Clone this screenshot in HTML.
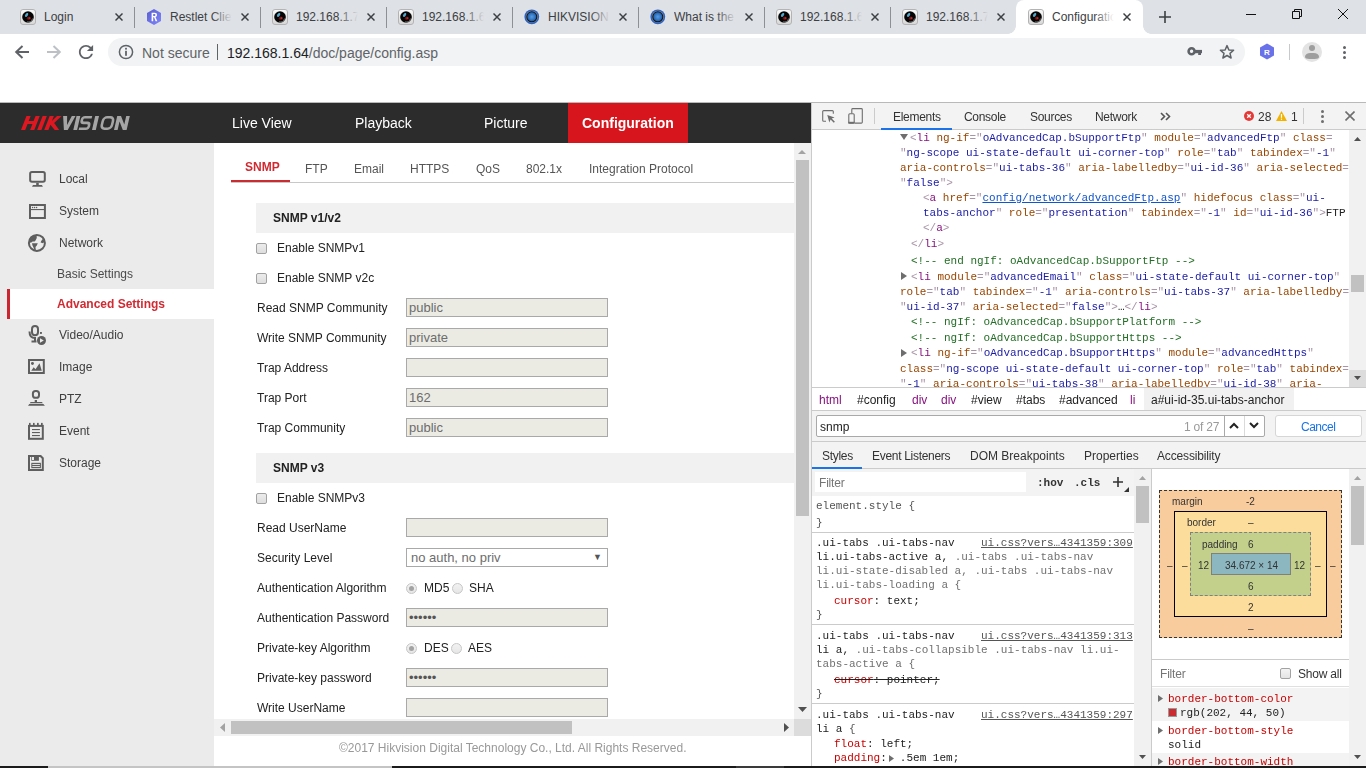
<!DOCTYPE html>
<html><head><meta charset="utf-8">
<style>
*{margin:0;padding:0;box-sizing:border-box}
html,body{width:1366px;height:768px;overflow:hidden;background:#fff;font-family:"Liberation Sans",sans-serif;position:relative}
.a{position:absolute}
.t{position:absolute;white-space:nowrap;line-height:1;will-change:transform}
/* chrome */
#tabstrip{left:0;top:0;width:1366px;height:34px;background:#dee1e6}
.tab{position:absolute;top:0;height:34px;width:126px}
.tab .ttl{position:absolute;left:36px;top:10px;font-size:12px;color:#3c4043;width:62px;overflow:hidden;white-space:nowrap;line-height:14px}
.tab .fade{position:absolute;left:78px;top:8px;width:20px;height:20px;background:linear-gradient(to right,rgba(222,225,230,0),#dee1e6)}
.tab .sep{position:absolute;left:0;top:7px;width:1px;height:21px;background:#8d9094}
.tab .x{position:absolute;left:107px;top:13px;width:8px;height:8px}
#toolbar{left:0;top:34px;width:1366px;height:36px;background:#fff}
#pill{left:108px;top:38px;width:1137px;height:28px;border-radius:14px;background:#f1f3f4}

.tab.act{background:#fff;border-radius:8px 8px 0 0}
.tab.act:before,.tab.act:after{content:"";position:absolute;bottom:0;width:8px;height:8px;background:radial-gradient(circle at 0 0,transparent 7.5px,#fff 8px)}
.tab.act:before{left:-8px}
.tab.act:after{right:-8px;background:radial-gradient(circle at 100% 0,transparent 7.5px,#fff 8px)}
.tab.act .fade{background:linear-gradient(to right,rgba(255,255,255,0),#fff)}
.fi{position:absolute;left:12px;top:9px;width:16px;height:16px;display:block}

.cb{position:absolute;width:11px;height:11px;border:1px solid #a2a2a2;border-radius:2px;background:linear-gradient(#ececec,#dedede)}
.inp{position:absolute;left:406px;width:202px;height:19px;border:1px solid #a9a9a9;background:#ebebe4;color:#6d6d6d;font-size:13px;line-height:17px;padding-left:2px;white-space:nowrap}
.inp.pw{padding-left:2px;color:#555}
.sel{position:absolute;left:406px;width:202px;height:19px;border:1px solid #a9a9a9;background:#fff;color:#6d6d6d;font-size:13px;line-height:17px;padding-left:4px;white-space:nowrap}
.sel span{position:absolute;right:5px;top:0;font-size:9px;color:#555}
.rd{position:absolute;width:11px;height:11px;border-radius:50%;border:1px solid #c6c6c6;background:linear-gradient(#f2f2f2,#e6e6e6)}
.rd.on:after{content:"";position:absolute;left:2px;top:2px;width:5px;height:5px;border-radius:50%;background:#a3a3a3}

.m{position:absolute;white-space:nowrap;will-change:transform;font-family:"Liberation Mono",monospace;font-size:11px;line-height:11px;color:#222}
.m b{font-weight:normal}
.p{color:#a894a6}.g{color:#881280}.n{color:#994500}.v{color:#1a1aa6}.c{color:#236e25}.lk{color:#1155cc;text-decoration:underline}
</style></head>
<body>
<div id="tabstrip" class="a">
<div class="tab" style="left:8px"><svg class="fi" viewBox="0 0 16 16"><defs><linearGradient id="cg" x1="0" y1="0" x2="0" y2="1"><stop offset="0" stop-color="#fbfbfb"/><stop offset="1" stop-color="#d6d6d6"/></linearGradient></defs><rect x="0.5" y="0.5" width="15" height="15" rx="2.5" fill="url(#cg)" stroke="#b3b3b3"/><circle cx="8" cy="8" r="5.8" fill="#050505"/><path d="M12.6 9.5A4.9 4.9 0 0 1 7 12.9" fill="none" stroke="#9a9a9a" stroke-width="0.7"/><ellipse cx="6.6" cy="5.9" rx="2.2" ry="1.3" transform="rotate(-55 6.6 5.9)" fill="#4fa9cc"/><ellipse cx="8.9" cy="9.3" rx="2.1" ry="1.7" fill="#6a0d0d"/><ellipse cx="9.3" cy="8.9" rx="0.9" ry="0.5" fill="#d85a5a"/></svg><div class="ttl">Login</div><div class="fade"></div><svg class="x" viewBox="0 0 8 8"><path d="M0.5 0.5L7.5 7.5M7.5 0.5L0.5 7.5" stroke="#3c4043" stroke-width="1.45"/></svg></div>
<div class="tab" style="left:134px"><div class="sep"></div><svg class="fi" viewBox="0 0 16 16"><defs><linearGradient id="rg" x1="0" y1="0" x2="1" y2="1"><stop offset="0" stop-color="#5a5fcf"/><stop offset="1" stop-color="#7f86fb"/></linearGradient></defs><path d="M8 0L15 4V12L8 16L1 12V4Z" fill="url(#rg)"/><path d="M5.6 12.2V3.8H8.6C10.2 3.8 11 4.6 11 5.9C11 7 10.4 7.6 9.5 7.9L11.3 12.2H9.6L8.1 8.3H7.2V12.2Z M7.2 5.1V7.1H8.4C9 7.1 9.4 6.8 9.4 6.1C9.4 5.4 9 5.1 8.4 5.1Z" fill="#fff"/></svg><div class="ttl">Restlet Client - REST API</div><div class="fade"></div><svg class="x" viewBox="0 0 8 8"><path d="M0.5 0.5L7.5 7.5M7.5 0.5L0.5 7.5" stroke="#3c4043" stroke-width="1.45"/></svg></div>
<div class="tab" style="left:260px"><div class="sep"></div><svg class="fi" viewBox="0 0 16 16"><defs><linearGradient id="cg" x1="0" y1="0" x2="0" y2="1"><stop offset="0" stop-color="#fbfbfb"/><stop offset="1" stop-color="#d6d6d6"/></linearGradient></defs><rect x="0.5" y="0.5" width="15" height="15" rx="2.5" fill="url(#cg)" stroke="#b3b3b3"/><circle cx="8" cy="8" r="5.8" fill="#050505"/><path d="M12.6 9.5A4.9 4.9 0 0 1 7 12.9" fill="none" stroke="#9a9a9a" stroke-width="0.7"/><ellipse cx="6.6" cy="5.9" rx="2.2" ry="1.3" transform="rotate(-55 6.6 5.9)" fill="#4fa9cc"/><ellipse cx="8.9" cy="9.3" rx="2.1" ry="1.7" fill="#6a0d0d"/><ellipse cx="9.3" cy="8.9" rx="0.9" ry="0.5" fill="#d85a5a"/></svg><div class="ttl">192.168.1.76</div><div class="fade"></div><svg class="x" viewBox="0 0 8 8"><path d="M0.5 0.5L7.5 7.5M7.5 0.5L0.5 7.5" stroke="#3c4043" stroke-width="1.45"/></svg></div>
<div class="tab" style="left:386px"><div class="sep"></div><svg class="fi" viewBox="0 0 16 16"><defs><linearGradient id="cg" x1="0" y1="0" x2="0" y2="1"><stop offset="0" stop-color="#fbfbfb"/><stop offset="1" stop-color="#d6d6d6"/></linearGradient></defs><rect x="0.5" y="0.5" width="15" height="15" rx="2.5" fill="url(#cg)" stroke="#b3b3b3"/><circle cx="8" cy="8" r="5.8" fill="#050505"/><path d="M12.6 9.5A4.9 4.9 0 0 1 7 12.9" fill="none" stroke="#9a9a9a" stroke-width="0.7"/><ellipse cx="6.6" cy="5.9" rx="2.2" ry="1.3" transform="rotate(-55 6.6 5.9)" fill="#4fa9cc"/><ellipse cx="8.9" cy="9.3" rx="2.1" ry="1.7" fill="#6a0d0d"/><ellipse cx="9.3" cy="8.9" rx="0.9" ry="0.5" fill="#d85a5a"/></svg><div class="ttl">192.168.1.64</div><div class="fade"></div><svg class="x" viewBox="0 0 8 8"><path d="M0.5 0.5L7.5 7.5M7.5 0.5L0.5 7.5" stroke="#3c4043" stroke-width="1.45"/></svg></div>
<div class="tab" style="left:512px"><div class="sep"></div><svg class="fi" viewBox="0 0 16 16"><defs><radialGradient id="gg" cx="0.5" cy="0.5" r="0.5"><stop offset="0" stop-color="#5a9ee6"/><stop offset="1" stop-color="#1d5fae"/></radialGradient></defs><circle cx="7.8" cy="7.8" r="7.4" fill="#2b63c4"/><circle cx="7.8" cy="7.8" r="6" fill="#8a8a8a"/><circle cx="7.8" cy="7.8" r="5.5" fill="#141414"/><circle cx="7.8" cy="7.8" r="4.5" fill="url(#gg)"/></svg><div class="ttl">HIKVISION (</div><div class="fade"></div><svg class="x" viewBox="0 0 8 8"><path d="M0.5 0.5L7.5 7.5M7.5 0.5L0.5 7.5" stroke="#3c4043" stroke-width="1.45"/></svg></div>
<div class="tab" style="left:638px"><div class="sep"></div><svg class="fi" viewBox="0 0 16 16"><defs><radialGradient id="gg" cx="0.5" cy="0.5" r="0.5"><stop offset="0" stop-color="#5a9ee6"/><stop offset="1" stop-color="#1d5fae"/></radialGradient></defs><circle cx="7.8" cy="7.8" r="7.4" fill="#2b63c4"/><circle cx="7.8" cy="7.8" r="6" fill="#8a8a8a"/><circle cx="7.8" cy="7.8" r="5.5" fill="#141414"/><circle cx="7.8" cy="7.8" r="4.5" fill="url(#gg)"/></svg><div class="ttl">What is the</div><div class="fade"></div><svg class="x" viewBox="0 0 8 8"><path d="M0.5 0.5L7.5 7.5M7.5 0.5L0.5 7.5" stroke="#3c4043" stroke-width="1.45"/></svg></div>
<div class="tab" style="left:764px"><div class="sep"></div><svg class="fi" viewBox="0 0 16 16"><defs><linearGradient id="cg" x1="0" y1="0" x2="0" y2="1"><stop offset="0" stop-color="#fbfbfb"/><stop offset="1" stop-color="#d6d6d6"/></linearGradient></defs><rect x="0.5" y="0.5" width="15" height="15" rx="2.5" fill="url(#cg)" stroke="#b3b3b3"/><circle cx="8" cy="8" r="5.8" fill="#050505"/><path d="M12.6 9.5A4.9 4.9 0 0 1 7 12.9" fill="none" stroke="#9a9a9a" stroke-width="0.7"/><ellipse cx="6.6" cy="5.9" rx="2.2" ry="1.3" transform="rotate(-55 6.6 5.9)" fill="#4fa9cc"/><ellipse cx="8.9" cy="9.3" rx="2.1" ry="1.7" fill="#6a0d0d"/><ellipse cx="9.3" cy="8.9" rx="0.9" ry="0.5" fill="#d85a5a"/></svg><div class="ttl">192.168.1.64</div><div class="fade"></div><svg class="x" viewBox="0 0 8 8"><path d="M0.5 0.5L7.5 7.5M7.5 0.5L0.5 7.5" stroke="#3c4043" stroke-width="1.45"/></svg></div>
<div class="tab" style="left:890px"><div class="sep"></div><svg class="fi" viewBox="0 0 16 16"><defs><linearGradient id="cg" x1="0" y1="0" x2="0" y2="1"><stop offset="0" stop-color="#fbfbfb"/><stop offset="1" stop-color="#d6d6d6"/></linearGradient></defs><rect x="0.5" y="0.5" width="15" height="15" rx="2.5" fill="url(#cg)" stroke="#b3b3b3"/><circle cx="8" cy="8" r="5.8" fill="#050505"/><path d="M12.6 9.5A4.9 4.9 0 0 1 7 12.9" fill="none" stroke="#9a9a9a" stroke-width="0.7"/><ellipse cx="6.6" cy="5.9" rx="2.2" ry="1.3" transform="rotate(-55 6.6 5.9)" fill="#4fa9cc"/><ellipse cx="8.9" cy="9.3" rx="2.1" ry="1.7" fill="#6a0d0d"/><ellipse cx="9.3" cy="8.9" rx="0.9" ry="0.5" fill="#d85a5a"/></svg><div class="ttl">192.168.1.76</div><div class="fade"></div><svg class="x" viewBox="0 0 8 8"><path d="M0.5 0.5L7.5 7.5M7.5 0.5L0.5 7.5" stroke="#3c4043" stroke-width="1.45"/></svg></div>
<div class="tab act" style="left:1016px;width:127px"><svg class="fi" viewBox="0 0 16 16"><defs><linearGradient id="cg" x1="0" y1="0" x2="0" y2="1"><stop offset="0" stop-color="#fbfbfb"/><stop offset="1" stop-color="#d6d6d6"/></linearGradient></defs><rect x="0.5" y="0.5" width="15" height="15" rx="2.5" fill="url(#cg)" stroke="#b3b3b3"/><circle cx="8" cy="8" r="5.8" fill="#050505"/><path d="M12.6 9.5A4.9 4.9 0 0 1 7 12.9" fill="none" stroke="#9a9a9a" stroke-width="0.7"/><ellipse cx="6.6" cy="5.9" rx="2.2" ry="1.3" transform="rotate(-55 6.6 5.9)" fill="#4fa9cc"/><ellipse cx="8.9" cy="9.3" rx="2.1" ry="1.7" fill="#6a0d0d"/><ellipse cx="9.3" cy="8.9" rx="0.9" ry="0.5" fill="#d85a5a"/></svg><div class="ttl">Configuration</div><div class="fade"></div><svg class="x" viewBox="0 0 8 8"><path d="M0.5 0.5L7.5 7.5M7.5 0.5L0.5 7.5" stroke="#3c4043" stroke-width="1.45"/></svg></div>
<svg class="a" style="left:1158px;top:10px" width="14" height="14" viewBox="0 0 14 14"><path d="M7 1V13M1 7H13" stroke="#3c4043" stroke-width="1.6"/></svg>
<svg class="a" style="left:1246px;top:14px" width="10" height="1"><rect width="10" height="1" fill="#111"/></svg>
<svg class="a" style="left:1291px;top:8px" width="12" height="12" viewBox="0 0 12 12"><path d="M1.5 3.5H8.5V10.5H1.5Z M3.5 3.5V1.5H10.5V8.5H8.5" fill="none" stroke="#111" stroke-width="1"/></svg>
<svg class="a" style="left:1338px;top:9px" width="10" height="10" viewBox="0 0 10 10"><path d="M0 0L10 10M10 0L0 10" stroke="#111" stroke-width="1"/></svg>
</div>
<div id="toolbar" class="a"></div>
<div id="pill" class="a"></div>
<svg class="a" style="left:14px;top:44px" width="16" height="16" viewBox="0 0 16 16"><path d="M15 8H2.5M8.5 2L2.2 8L8.5 14" fill="none" stroke="#5f6368" stroke-width="2"/></svg>
<svg class="a" style="left:46px;top:44px" width="16" height="16" viewBox="0 0 16 16"><path d="M1 8H13.5M7.5 2L13.8 8L7.5 14" fill="none" stroke="#bdc1c6" stroke-width="2"/></svg>
<svg class="a" style="left:78px;top:44px" width="16" height="16" viewBox="3 3 18 18"><path d="M17.65 6.35A7.958 7.958 0 0 0 12 4c-4.42 0-7.99 3.58-7.99 8s3.57 8 7.99 8c3.730 0 6.84-2.55 7.73-6h-2.08A5.99 5.99 0 0 1 12 18c-3.31 0-6-2.69-6-6s2.69-6 6-6c1.66 0 3.14.69 4.22 1.78L13 11h7V4l-2.35 2.35z" fill="#5f6368"/></svg>
<svg class="a" style="left:118px;top:44px" width="16" height="16" viewBox="0 0 16 16"><circle cx="8" cy="8" r="6.6" fill="none" stroke="#5f6368" stroke-width="1.5"/><rect x="7.1" y="6.8" width="1.8" height="5" fill="#5f6368"/><rect x="7.1" y="3.8" width="1.8" height="1.8" fill="#5f6368"/></svg>
<div class="t" style="left:142px;top:45.5px;font-size:14px;color:#5f6368;will-change:auto">Not secure</div>
<div class="a" style="left:217px;top:44px;width:1px;height:16px;background:#5f6368"></div>
<div class="t" style="left:227px;top:45.5px;font-size:14px;color:#202124;will-change:auto">192.168.1.64<span style="color:#5f6368">/doc/page/config.asp</span></div>
<svg class="a" style="left:1187px;top:45px" width="16" height="12" viewBox="0 0 16 12"><circle cx="4.6" cy="6.2" r="3" fill="none" stroke="#5f6368" stroke-width="2.6"/><rect x="7" y="4.9" width="8" height="3.3" fill="#5f6368"/><rect x="11.2" y="8" width="2.8" height="2" fill="#5f6368"/></svg>
<svg class="a" style="left:1219px;top:44px" width="16" height="16" viewBox="0 0 16 16"><path d="M8 1.6L9.9 6L14.6 6.3L11 9.4L12.1 14L8 11.5L3.9 14L5 9.4L1.4 6.3L6.1 6Z" fill="none" stroke="#5f6368" stroke-width="1.5" stroke-linejoin="round"/></svg>
<svg class="a" style="left:1259px;top:43px" width="16" height="17" viewBox="0 0 16 17"><path d="M8 0.5L15 4.5V12.5L8 16.5L1 12.5V4.5Z" fill="#6a72ea"/><text x="8" y="12" text-anchor="middle" font-family="Liberation Sans" font-weight="bold" font-size="8" fill="#fff">R</text></svg>
<div class="a" style="left:1289px;top:44px;width:1px;height:16px;background:#c7c9cc"></div>
<div class="a" style="left:1302px;top:42px;width:20px;height:20px;border-radius:50%;background:#e3e3e3;overflow:hidden"><div class="a" style="left:7px;top:3px;width:6px;height:6px;border-radius:50%;background:#9e9e9e"></div><div class="a" style="left:3px;top:11px;width:14px;height:6px;border-radius:7px 7px 6px 6px/5px 5px 3px 3px;background:#9e9e9e"></div></div>
<div class="a" style="left:1343px;top:46px;width:3px;height:3px;border-radius:50%;background:#5f6368"></div>
<div class="a" style="left:1343px;top:51px;width:3px;height:3px;border-radius:50%;background:#5f6368"></div>
<div class="a" style="left:1343px;top:56px;width:3px;height:3px;border-radius:50%;background:#5f6368"></div>
<div class="a" style="left:0;top:102px;width:1366px;height:1px;background:#b9b9b9"></div>

<!-- PAGE -->
<div class="a" style="left:0;top:103px;width:811px;height:40px;background:#2c2c2c"></div>
<svg class="a" style="left:0;top:0" width="140" height="140" viewBox="0 0 140 140"><g transform="matrix(1 0 -0.39 1 50.7 0)" fill="#df1720"><path d="M21 116H25.2V121.1H30.1V116H34.3V130H30.1V123.9H25.2V130H21Z"/><rect x="37.15" y="116" width="4.25" height="14"/><path d="M44.2 116H48.4V121L51.6 116H56.2L51.4 123L59.2 130H54.7L48.4 124.8V130H44.2Z"/></g><g transform="matrix(1 0 -0.23 1 29.9 0)" fill="#a5a5a5"><path d="M59.9 116H63.9L65.9 125L68.6 116H72.3L67.7 130H63.9Z"/><rect x="73.3" y="116" width="3.8" height="14"/><path d="M89 117.3H82Q79.6 117.3 79.6 119.7V120.6Q79.6 122.9 82 122.9H85.6Q88 122.9 88 125.3V126.3Q88 128.7 85.6 128.7H78.6" fill="none" stroke="#a5a5a5" stroke-width="2.6"/><rect x="92" y="116" width="3.8" height="14"/><rect x="100.7" y="117.3" width="10.2" height="11.4" rx="3.6" fill="none" stroke="#a5a5a5" stroke-width="2.6"/><path d="M114 116H117.8L123 124.4V116H126.6V130H122.8L117.6 121.6V130H114Z"/></g></svg>
<div class="t" style="left:232px;top:116px;font-size:14px;color:#fff">Live View</div>
<div class="t" style="left:355px;top:116px;font-size:14px;color:#fff">Playback</div>
<div class="t" style="left:484px;top:116px;font-size:14px;color:#fff">Picture</div>
<div class="a" style="left:568px;top:103px;width:120px;height:40px;background:#d7151d"></div>
<div class="t" style="left:582px;top:116px;font-size:14px;color:#fff;font-weight:bold">Configuration</div>
<!-- sidebar -->
<div class="a" style="left:0;top:143px;width:214px;height:623px;background:#ebebeb"></div>
<div class="a" style="left:7px;top:289px;width:207px;height:30px;background:#fff"></div>
<div class="a" style="left:7px;top:289px;width:3px;height:30px;background:#cd2530"></div>
<div class="t" style="left:59px;top:173px;font-size:12px;color:#404040">Local</div>
<div class="t" style="left:59px;top:205px;font-size:12px;color:#404040">System</div>
<div class="t" style="left:59px;top:237px;font-size:12px;color:#404040">Network</div>
<div class="t" style="left:57px;top:268px;font-size:12px;color:#4a4a4a">Basic Settings</div>
<div class="t" style="left:57px;top:298px;font-size:12px;color:#d02b33;font-weight:bold">Advanced Settings</div>
<div class="t" style="left:59px;top:329px;font-size:12px;color:#404040">Video/Audio</div>
<div class="t" style="left:59px;top:361px;font-size:12px;color:#404040">Image</div>
<div class="t" style="left:59px;top:393px;font-size:12px;color:#404040">PTZ</div>
<div class="t" style="left:59px;top:425px;font-size:12px;color:#404040">Event</div>
<div class="t" style="left:59px;top:457px;font-size:12px;color:#404040">Storage</div>

<svg class="a" style="left:28px;top:170px" width="20" height="18" viewBox="0 0 20 18"><rect x="2.15" y="2" width="14.65" height="9.8" rx="1.8" fill="none" stroke="#5e5e5e" stroke-width="2"/><rect x="8.2" y="12.8" width="2.55" height="2.4" fill="#5e5e5e"/><path d="M5 15H13.9L14.9 16.8H4Z" fill="#5e5e5e"/></svg>
<svg class="a" style="left:28px;top:203px" width="20" height="17" viewBox="0 0 20 17"><rect x="2" y="2" width="14.9" height="13" fill="none" stroke="#5e5e5e" stroke-width="2"/><rect x="2" y="6" width="14.9" height="1.1" fill="#5e5e5e"/><circle cx="4.6" cy="4.5" r="0.7" fill="#5e5e5e"/><circle cx="6.6" cy="4.5" r="0.7" fill="#5e5e5e"/><circle cx="8.6" cy="4.5" r="0.7" fill="#5e5e5e"/></svg>
<svg class="a" style="left:26px;top:232px" width="22" height="22" viewBox="0 0 22 22"><circle cx="10.9" cy="10.9" r="8" fill="none" stroke="#5e5e5e" stroke-width="2"/><path d="M4.5 5.5L7 3.6L10.6 3.2L10.8 6L9.5 8.4L8.6 9.6L6.5 9.4L5.8 10.2L4 10.8L3.4 9Z M6 11.2L11.8 11.2L10.8 13.6L9.5 15L9.8 18.4L8.5 18.2L7.6 15.8L6.4 13.2Z M17 6.8L18.6 9.5L17 11.2L14.6 10.5L15.2 9Z" fill="#5e5e5e"/></svg>
<svg class="a" style="left:27px;top:324px" width="21" height="22" viewBox="0 0 21 22"><rect x="5" y="2" width="6" height="9.2" rx="3" fill="none" stroke="#5e5e5e" stroke-width="2"/><path d="M2.5 7.5C2.5 12 4.5 14 8 14" fill="none" stroke="#5e5e5e" stroke-width="2"/><rect x="7" y="13" width="2" height="4" fill="#5e5e5e"/><rect x="4.5" y="16.5" width="5" height="2" fill="#5e5e5e"/><rect x="13" y="8" width="1.9" height="1.9" fill="#5e5e5e"/><circle cx="14.5" cy="16.5" r="4.5" fill="#5e5e5e"/><path d="M13 14.2V18.8L16.8 16.5Z" fill="#ebebeb"/></svg>
<svg class="a" style="left:27px;top:358px" width="20" height="17" viewBox="0 0 20 17"><rect x="2" y="2" width="14.8" height="13" fill="none" stroke="#5e5e5e" stroke-width="2"/><circle cx="5.45" cy="5.45" r="1.45" fill="#5e5e5e"/><path d="M4.2 12.7L6.7 9.2L8.5 11.3L12.5 5.2L14.8 12.7Z" fill="#5e5e5e"/></svg>
<svg class="a" style="left:26px;top:386px" width="22" height="22" viewBox="0 0 22 22"><rect x="6.9" y="5" width="6.1" height="6.75" rx="2.6" fill="none" stroke="#5e5e5e" stroke-width="2"/><rect x="8.7" y="14" width="2.3" height="2.8" fill="#5e5e5e"/><path d="M4.6 16H16L16.8 17.2H3.8Z M3.3 17.9H17.4L18.9 19.8H2Z" fill="#5e5e5e"/></svg>
<svg class="a" style="left:26px;top:414px" width="22" height="28" viewBox="0 0 22 28"><rect x="3" y="11.9" width="13.8" height="12.9" fill="none" stroke="#5e5e5e" stroke-width="2"/><rect x="3" y="8.9" width="1.6" height="2.5" fill="#5e5e5e"/><rect x="7" y="8.9" width="1.6" height="2.5" fill="#5e5e5e"/><rect x="11" y="8.9" width="1.7" height="2.5" fill="#5e5e5e"/><rect x="15" y="8.9" width="1.7" height="2.5" fill="#5e5e5e"/><rect x="6" y="15" width="7.9" height="1.1" fill="#5e5e5e"/><rect x="6" y="18" width="7.9" height="1.1" fill="#5e5e5e"/><rect x="6" y="21" width="7.9" height="1.1" fill="#5e5e5e"/></svg>
<svg class="a" style="left:26px;top:450px" width="22" height="24" viewBox="0 0 22 24"><path d="M3 6H14.6L16.8 8.2V19.9H3Z" fill="none" stroke="#5e5e5e" stroke-width="2" stroke-linejoin="miter"/><rect x="5.3" y="6.5" width="7.6" height="4.3" fill="#5e5e5e"/><rect x="6" y="7" width="2" height="3" fill="#ebebeb"/><rect x="5.3" y="12.8" width="9.6" height="5.4" fill="#5e5e5e"/><rect x="6.3" y="14" width="7.6" height="0.9" fill="#ebebeb"/><rect x="6.3" y="16" width="7.6" height="0.9" fill="#ebebeb"/></svg>
<!-- content -->
<div class="a" style="left:214px;top:143px;width:597px;height:623px;background:#fff"></div>
<div class="t" style="left:244.5px;top:160.85px;font-size:12px;color:#d02b33;font-weight:bold">SNMP</div>
<div class="t" style="left:305px;top:162.85px;font-size:12px;color:#555;">FTP</div>
<div class="t" style="left:353.5px;top:162.85px;font-size:12px;color:#555;">Email</div>
<div class="t" style="left:410px;top:162.85px;font-size:12px;color:#555;">HTTPS</div>
<div class="t" style="left:476px;top:162.85px;font-size:12px;color:#555;">QoS</div>
<div class="t" style="left:526px;top:162.85px;font-size:12px;color:#555;">802.1x</div>
<div class="t" style="left:588.5px;top:162.85px;font-size:12px;color:#555;">Integration Protocol</div>
<div class="a" style="left:231px;top:182px;width:563px;height:1px;background:#c8c8c8"></div>
<div class="a" style="left:231px;top:180px;width:59px;height:2px;background:#ca2c32"></div>
<div class="a" style="left:256px;top:203px;width:538px;height:30px;background:#f1f1f1"></div>
<div class="t" style="left:273px;top:211.85px;font-size:12px;color:#222;font-weight:bold">SNMP v1/v2</div>
<div class="a" style="left:256px;top:453px;width:538px;height:30px;background:#f1f1f1"></div>
<div class="t" style="left:273px;top:461.85px;font-size:12px;color:#222;font-weight:bold">SNMP v3</div>
<div class="cb" style="left:256px;top:243px"></div>
<div class="t" style="left:277px;top:241.85px;font-size:12px;color:#222;">Enable SNMPv1</div>
<div class="cb" style="left:256px;top:273px"></div>
<div class="t" style="left:277px;top:271.85px;font-size:12px;color:#222;">Enable SNMP v2c</div>
<div class="cb" style="left:256px;top:493px"></div>
<div class="t" style="left:277px;top:491.85px;font-size:12px;color:#222;">Enable SNMPv3</div>
<div class="t" style="left:256.5px;top:301.85px;font-size:12px;color:#222;">Read SNMP Community</div>
<div class="inp" style="top:298px">public</div>
<div class="t" style="left:256.5px;top:331.85px;font-size:12px;color:#222;">Write SNMP Community</div>
<div class="inp" style="top:328px">private</div>
<div class="t" style="left:256.5px;top:361.85px;font-size:12px;color:#222;">Trap Address</div>
<div class="inp" style="top:358px"></div>
<div class="t" style="left:256.5px;top:391.85px;font-size:12px;color:#222;">Trap Port</div>
<div class="inp" style="top:388px">162</div>
<div class="t" style="left:256.5px;top:421.85px;font-size:12px;color:#222;">Trap Community</div>
<div class="inp" style="top:418px">public</div>
<div class="t" style="left:256.5px;top:521.85px;font-size:12px;color:#222;">Read UserName</div>
<div class="inp" style="top:518px"></div>
<div class="t" style="left:256.5px;top:611.85px;font-size:12px;color:#222;">Authentication Password</div>
<div class="inp pw" style="top:608px">&bull;&bull;&bull;&bull;&bull;&bull;</div>
<div class="t" style="left:256.5px;top:671.85px;font-size:12px;color:#222;">Private-key password</div>
<div class="inp pw" style="top:668px">&bull;&bull;&bull;&bull;&bull;&bull;</div>
<div class="t" style="left:256.5px;top:701.85px;font-size:12px;color:#222;">Write UserName</div>
<div class="inp" style="top:698px"></div>
<div class="t" style="left:256.5px;top:551.85px;font-size:12px;color:#222;">Security Level</div>
<div class="sel" style="top:548px">no auth, no priv<span>&#9660;</span></div>
<div class="t" style="left:256.5px;top:581.85px;font-size:12px;color:#222;">Authentication Algorithm</div>
<div class="rd on" style="left:406px;top:583px"></div><div class="t" style="left:423.5px;top:581.85px;font-size:12px;color:#222;">MD5</div><div class="rd" style="left:452px;top:583px"></div><div class="t" style="left:469px;top:581.85px;font-size:12px;color:#222;">SHA</div>
<div class="t" style="left:256.5px;top:641.85px;font-size:12px;color:#222;">Private-key Algorithm</div>
<div class="rd on" style="left:406px;top:643px"></div><div class="t" style="left:423.5px;top:641.85px;font-size:12px;color:#222;">DES</div><div class="rd" style="left:451px;top:643px"></div><div class="t" style="left:468px;top:641.85px;font-size:12px;color:#222;">AES</div>
<div class="a" style="left:794px;top:143px;width:17px;height:576px;background:#f1f1f1"></div>
<div class="a" style="left:796px;top:160px;width:13px;height:356px;background:#c1c1c1"></div>
<svg class="a" style="left:798px;top:150px" width="8" height="4"><g transform="scale(0.889 0.8)"><path d="M0 5L4.5 0L9 5Z" fill="#a3a3a3"/></g></svg>
<svg class="a" style="left:798px;top:707px" width="9" height="5"><path d="M0 0L4.5 5L9 0Z" fill="#505050"/></svg>
<div class="a" style="left:214px;top:719px;width:580px;height:17px;background:#f1f1f1"></div>
<div class="a" style="left:231px;top:721px;width:341px;height:13px;background:#c1c1c1"></div>
<svg class="a" style="left:220px;top:723px" width="5" height="9"><path d="M5 0L0 4.5L5 9Z" fill="#a3a3a3"/></svg>
<svg class="a" style="left:784px;top:723px" width="5" height="9"><path d="M0 0L5 4.5L0 9Z" fill="#505050"/></svg>
<div class="a" style="left:794px;top:719px;width:17px;height:17px;background:#dcdcdc"></div>
<div class="t" style="left:338.5px;top:741.85px;font-size:12px;color:#999;">&copy;2017 Hikvision Digital Technology Co., Ltd. All Rights Reserved.</div>
<div class="a" style="left:811px;top:103px;width:555px;height:663px;background:#fff"></div>
<div class="a" style="left:811px;top:103px;width:1px;height:663px;background:#cbcbcb"></div>
<div class="a" style="left:812px;top:103px;width:554px;height:26px;background:#f3f3f3"></div>
<div class="a" style="left:812px;top:129px;width:554px;height:1px;background:#cbcbcb"></div>
<svg class="a" style="left:816px;top:104px" width="54" height="24" viewBox="816 104 54 24"><path d="M826 121.3H823.7Q822.7 121.3 822.7 120.3V111.6Q822.7 110.6 823.7 110.6H832.3Q833.3 110.6 833.3 111.6V113.7" fill="none" stroke="#6e6e6e" stroke-width="1.1"/><path d="M827.3 115.1L834.6 117.4L831.7 118.5L834.9 121.7L833.8 122.8L830.6 119.6L829.3 122.6Z" fill="#6e6e6e"/><rect x="848.8" y="113.7" width="5.4" height="9.4" rx="1" fill="none" stroke="#6e6e6e" stroke-width="1.1"/><rect x="848.2" y="121.8" width="6.5" height="1.8" fill="#6e6e6e"/><path d="M851.8 113.6V109.5Q851.8 108.6 852.7 108.6H861.3Q862.3 108.6 862.3 109.5V122.2Q862.3 123.1 861.3 123.1H854.7" fill="none" stroke="#6e6e6e" stroke-width="1.1"/></svg>

<div class="a" style="left:874px;top:108px;width:1px;height:16px;background:#cbcbcb"></div>
<div class="a" style="left:881px;top:128px;width:71px;height:2px;background:#1a73e8"></div>
<div class="t" style="left:893px;top:110.85px;font-size:12px;color:#333;letter-spacing:-0.3px">Elements</div>
<div class="t" style="left:963.5px;top:110.85px;font-size:12px;color:#333;letter-spacing:-0.3px">Console</div>
<div class="t" style="left:1029.5px;top:110.85px;font-size:12px;color:#333;letter-spacing:-0.3px">Sources</div>
<div class="t" style="left:1095px;top:110.85px;font-size:12px;color:#333;letter-spacing:-0.3px">Network</div>
<svg class="a" style="left:1160px;top:112px" width="11" height="9" viewBox="0 0 11 9"><path d="M1 1L4.5 4.5L1 8M6 1L9.5 4.5L6 8" fill="none" stroke="#555" stroke-width="1.6"/></svg>
<svg class="a" style="left:1244px;top:111px" width="10" height="10" viewBox="0 0 10 10"><circle cx="5" cy="5" r="5" fill="#e53935"/><path d="M3.2 3.2L6.8 6.8M6.8 3.2L3.2 6.8" stroke="#fff" stroke-width="1.3"/></svg>
<div class="t" style="left:1257.5px;top:110.85px;font-size:12px;color:#333;">28</div>
<svg class="a" style="left:1276px;top:111px" width="11" height="10" viewBox="0 0 11 10"><path d="M5.5 0L11 10H0Z" fill="#f2b200"/><rect x="4.9" y="3" width="1.2" height="3.8" fill="#fff"/><rect x="4.9" y="7.6" width="1.2" height="1.2" fill="#fff"/></svg>
<div class="t" style="left:1291px;top:110.85px;font-size:12px;color:#333;">1</div>
<div class="a" style="left:1303px;top:108px;width:1px;height:16px;background:#cbcbcb"></div>
<div class="a" style="left:1321px;top:110px;width:3px;height:3px;border-radius:50%;background:#6e6e6e"></div>
<div class="a" style="left:1321px;top:115px;width:3px;height:3px;border-radius:50%;background:#6e6e6e"></div>
<div class="a" style="left:1321px;top:120px;width:3px;height:3px;border-radius:50%;background:#6e6e6e"></div>
<svg class="a" style="left:1345px;top:111px" width="10" height="10" viewBox="0 0 10 10"><path d="M0.5 0.5L9.5 9.5M9.5 0.5L0.5 9.5" stroke="#6e6e6e" stroke-width="1.6"/></svg>
<div class="a" style="left:812px;top:130px;width:537px;height:258px;overflow:hidden">
<div class="m" style="left:97.8px;top:2.56px"><b class="p">&lt;</b><b class="g">li</b> <b class="n">ng-if</b><b class="p">="</b><b class="v">oAdvancedCap.bSupportFtp</b><b class="p">"</b> <b class="n">module</b><b class="p">="</b><b class="v">advancedFtp</b><b class="p">"</b> <b class="n">class</b><b class="p">=</b></div>
<div class="m" style="left:87.5px;top:17.56px"><b class="p">"</b><b class="v">ng-scope ui-state-default ui-corner-top</b><b class="p">"</b> <b class="n">role</b><b class="p">="</b><b class="v">tab</b><b class="p">"</b> <b class="n">tabindex</b><b class="p">="</b><b class="v">-1</b><b class="p">"</b></div>
<div class="m" style="left:87.5px;top:32.56px"><b class="n">aria-controls</b><b class="p">="</b><b class="v">ui-tabs-36</b><b class="p">"</b> <b class="n">aria-labelledby</b><b class="p">="</b><b class="v">ui-id-36</b><b class="p">"</b> <b class="n">aria-selected</b><b class="p">=</b></div>
<div class="m" style="left:87.5px;top:47.56px"><b class="p">"</b><b class="v">false</b><b class="p">"&gt;</b></div>
<div class="m" style="left:110.7px;top:62.56px"><b class="p">&lt;</b><b class="g">a</b> <b class="n">href</b><b class="p">="</b><b class="lk">config/network/advancedFtp.asp</b><b class="p">"</b> <b class="n">hidefocus</b> <b class="n">class</b><b class="p">="</b><b class="v">ui-</b></div>
<div class="m" style="left:110.7px;top:77.56px"><b class="v">tabs-anchor</b><b class="p">"</b> <b class="n">role</b><b class="p">="</b><b class="v">presentation</b><b class="p">"</b> <b class="n">tabindex</b><b class="p">="</b><b class="v">-1</b><b class="p">"</b> <b class="n">id</b><b class="p">="</b><b class="v">ui-id-36</b><b class="p">"</b><b class="p">&gt;</b>FTP</div>
<div class="m" style="left:110.7px;top:92.56px"><b class="p">&lt;/</b><b class="g">a</b><b class="p">&gt;</b></div>
<div class="m" style="left:98.5px;top:108.56px"><b class="p">&lt;/</b><b class="g">li</b><b class="p">&gt;</b></div>
<div class="m" style="left:98.5px;top:125.56px"><b class="c">&lt;!-- end ngIf: oAdvancedCap.bSupportFtp --&gt;</b></div>
<div class="m" style="left:98.5px;top:141.56px"><b class="p">&lt;</b><b class="g">li</b> <b class="n">module</b><b class="p">="</b><b class="v">advancedEmail</b><b class="p">"</b> <b class="n">class</b><b class="p">="</b><b class="v">ui-state-default ui-corner-top</b><b class="p">"</b></div>
<div class="m" style="left:87.5px;top:156.56px"><b class="n">role</b><b class="p">="</b><b class="v">tab</b><b class="p">"</b> <b class="n">tabindex</b><b class="p">="</b><b class="v">-1</b><b class="p">"</b> <b class="n">aria-controls</b><b class="p">="</b><b class="v">ui-tabs-37</b><b class="p">"</b> <b class="n">aria-labelledby</b><b class="p">=</b></div>
<div class="m" style="left:87.5px;top:171.56px"><b class="p">"</b><b class="v">ui-id-37</b><b class="p">"</b> <b class="n">aria-selected</b><b class="p">="</b><b class="v">false</b><b class="p">"</b><b class="p">&gt;</b>…<b class="p">&lt;/</b><b class="g">li</b><b class="p">&gt;</b></div>
<div class="m" style="left:98.5px;top:186.56px"><b class="c">&lt;!-- ngIf: oAdvancedCap.bSupportPlatform --&gt;</b></div>
<div class="m" style="left:98.5px;top:202.56px"><b class="c">&lt;!-- ngIf: oAdvancedCap.bSupportHttps --&gt;</b></div>
<div class="m" style="left:98.5px;top:217.56px"><b class="p">&lt;</b><b class="g">li</b> <b class="n">ng-if</b><b class="p">="</b><b class="v">oAdvancedCap.bSupportHttps</b><b class="p">"</b> <b class="n">module</b><b class="p">="</b><b class="v">advancedHttps</b><b class="p">"</b></div>
<div class="m" style="left:87.5px;top:233.56px"><b class="n">class</b><b class="p">="</b><b class="v">ng-scope ui-state-default ui-corner-top</b><b class="p">"</b> <b class="n">role</b><b class="p">="</b><b class="v">tab</b><b class="p">"</b> <b class="n">tabindex</b><b class="p">=</b></div>
<div class="m" style="left:87.5px;top:248.56px"><b class="p">"</b><b class="v">-1</b><b class="p">"</b> <b class="n">aria-controls</b><b class="p">="</b><b class="v">ui-tabs-38</b><b class="p">"</b> <b class="n">aria-labelledby</b><b class="p">="</b><b class="v">ui-id-38</b><b class="p">"</b> <b class="n">aria-</b></div>
</div>
<svg class="a" style="left:900px;top:134px" width="8" height="6"><path d="M0 0H8L4 6Z" fill="#6e6e6e"/></svg>
<svg class="a" style="left:901px;top:272px" width="6" height="8"><path d="M0 0V8L6 4Z" fill="#6e6e6e"/></svg>
<svg class="a" style="left:901px;top:349px" width="6" height="8"><path d="M0 0V8L6 4Z" fill="#6e6e6e"/></svg>
<div class="a" style="left:1349px;top:130px;width:17px;height:258px;background:#f1f1f1"></div>
<div class="a" style="left:1351px;top:275px;width:13px;height:17px;background:#c1c1c1"></div>
<svg class="a" style="left:1354px;top:137px" width="7" height="4"><path d="M0 4L3.5 0L7 4Z" fill="#505050"/></svg>
<div class="a" style="left:1349px;top:370px;width:17px;height:18px;background:#dcdcdc"></div>
<svg class="a" style="left:1354px;top:376px" width="7" height="4"><path d="M0 0L3.5 4L7 0Z" fill="#505050"/></svg>
<div class="a" style="left:812px;top:387px;width:554px;height:1px;background:#cbcbcb"></div>
<div class="a" style="left:1144px;top:388px;width:150px;height:22px;background:#f1f1f1"></div>
<div class="t" style="left:819.4px;top:393.85px;font-size:12px;color:#881280;">html</div>
<div class="t" style="left:857px;top:393.85px;font-size:12px;color:#222;">#config</div>
<div class="t" style="left:911.5px;top:393.85px;font-size:12px;color:#881280;">div</div>
<div class="t" style="left:941px;top:393.85px;font-size:12px;color:#881280;">div</div>
<div class="t" style="left:970.8px;top:393.85px;font-size:12px;color:#222;">#view</div>
<div class="t" style="left:1015.5px;top:393.85px;font-size:12px;color:#222;">#tabs</div>
<div class="t" style="left:1058.7px;top:393.85px;font-size:12px;color:#222;">#advanced</div>
<div class="t" style="left:1130.3px;top:393.85px;font-size:12px;color:#881280;">li</div>
<div class="t" style="left:1151px;top:393.85px;font-size:12px;color:#222;">a#ui-id-35.ui-tabs-anchor</div>
<div class="a" style="left:812px;top:410px;width:554px;height:1px;background:#cbcbcb"></div>
<div class="a" style="left:812px;top:411px;width:554px;height:30px;background:#f3f3f3"></div>
<div class="a" style="left:816px;top:415px;width:449px;height:22px;background:#fff;border:1px solid #a9a9a9;border-radius:2px"></div>
<div class="t" style="left:820.4px;top:420.85px;font-size:12px;color:#222;">snmp</div>
<div class="t" style="left:1184px;top:420.85px;font-size:12px;color:#9a9a9a;letter-spacing:-0.2px">1 of 27</div>
<div class="a" style="left:1224px;top:416px;width:1px;height:20px;background:#a9a9a9"></div>
<div class="a" style="left:1244px;top:416px;width:1px;height:20px;background:#dadada"></div>
<svg class="a" style="left:1229px;top:422px" width="10" height="7" viewBox="0 0 10 7"><path d="M1 6L5 2L9 6" fill="none" stroke="#222" stroke-width="2"/></svg>
<svg class="a" style="left:1249px;top:422px" width="10" height="7" viewBox="0 0 10 7"><path d="M1 1L5 5L9 1" fill="none" stroke="#222" stroke-width="2"/></svg>
<div class="a" style="left:1275px;top:415px;width:87px;height:22px;background:#fff;border:1px solid #d6d6d6;border-radius:3px"></div>
<div class="t" style="left:1301.3px;top:420.85px;font-size:12px;color:#1a73e8;letter-spacing:-0.5px">Cancel</div>
<div class="a" style="left:812px;top:441px;width:554px;height:1px;background:#cbcbcb"></div>
<div class="a" style="left:812px;top:442px;width:554px;height:27px;background:#f3f3f3"></div>
<div class="t" style="left:822px;top:449.85px;font-size:12px;color:#333;letter-spacing:-0.3px">Styles</div>
<div class="t" style="left:872px;top:449.85px;font-size:12px;color:#333;letter-spacing:-0.3px">Event Listeners</div>
<div class="t" style="left:970.2px;top:449.85px;font-size:12px;color:#333;">DOM Breakpoints</div>
<div class="t" style="left:1083.5px;top:449.85px;font-size:12px;color:#333;">Properties</div>
<div class="t" style="left:1157px;top:449.85px;font-size:12px;color:#333;letter-spacing:-0.15px">Accessibility</div>
<div class="a" style="left:812px;top:468px;width:554px;height:1px;background:#cbcbcb"></div>
<div class="a" style="left:812px;top:467px;width:50px;height:2px;background:#1a73e8"></div>
<div class="a" style="left:812px;top:469px;width:322px;height:27px;background:#f3f3f3"></div>
<div class="a" style="left:815px;top:472px;width:211px;height:20px;background:#fff"></div>
<div class="t" style="left:819.4px;top:476.85px;font-size:12px;color:#757575;letter-spacing:-0.2px">Filter</div>
<div class="m" style="left:1037px;top:477.56px;color:#333;font-weight:bold">:hov</div>
<div class="m" style="left:1073.5px;top:477.56px;color:#333;font-weight:bold">.cls</div>
<svg class="a" style="left:1112px;top:476px" width="12" height="12" viewBox="0 0 12 12"><path d="M6 1V11M1 6H11" stroke="#333" stroke-width="1.6"/></svg>
<svg class="a" style="left:1124px;top:487px" width="5" height="5"><path d="M5 0V5H0Z" fill="#333"/></svg>
<div class="m" style="left:816px;top:500.56px;color:#555;">element.style {</div>
<div class="m" style="left:816px;top:517.56px;color:#555;">}</div>
<div class="a" style="left:812px;top:532px;width:322px;height:1px;background:#cbcbcb"></div>
<div class="m" style="left:816px;top:537.56px;">.ui-tabs .ui-tabs-nav</div>
<div class="m" style="left:980.5px;top:537.56px;color:#555;"><span style="text-decoration:underline">ui.css?vers…4341359:309</span></div>
<div class="m" style="left:816px;top:551.56px;">li.ui-tabs-active a,<span style="color:#707070"> .ui-tabs .ui-tabs-nav</span></div>
<div class="m" style="left:816px;top:565.56px;color:#707070;">li.ui-state-disabled a, .ui-tabs .ui-tabs-nav</div>
<div class="m" style="left:816px;top:579.56px;color:#707070;">li.ui-tabs-loading a {</div>
<div class="m" style="left:833.7px;top:595.56px;"><span style="color:#c80000">cursor</span>: text;</div>
<div class="m" style="left:816px;top:609.56px;color:#555;">}</div>
<div class="a" style="left:812px;top:624px;width:322px;height:1px;background:#cbcbcb"></div>
<div class="m" style="left:816px;top:630.56px;">.ui-tabs .ui-tabs-nav</div>
<div class="m" style="left:980.5px;top:630.56px;color:#555;"><span style="text-decoration:underline">ui.css?vers…4341359:313</span></div>
<div class="m" style="left:816px;top:644.56px;">li a,<span style="color:#707070"> .ui-tabs-collapsible .ui-tabs-nav li.ui-</span></div>
<div class="m" style="left:816px;top:658.56px;color:#707070;">tabs-active a {</div>
<div class="m" style="left:833.7px;top:674.56px;text-decoration:line-through"><span style="color:#c80000">cursor</span>: pointer;</div>
<div class="m" style="left:816px;top:688.56px;color:#555;">}</div>
<div class="a" style="left:812px;top:703px;width:322px;height:1px;background:#cbcbcb"></div>
<div class="m" style="left:816px;top:709.56px;">.ui-tabs .ui-tabs-nav</div>
<div class="m" style="left:980.5px;top:709.56px;color:#555;"><span style="text-decoration:underline">ui.css?vers…4341359:297</span></div>
<div class="m" style="left:816px;top:723.56px;">li a <span style="color:#555">{</span></div>
<div class="m" style="left:833.7px;top:738.56px;"><span style="color:#c80000">float</span>: left;</div>
<div class="m" style="left:833.7px;top:752.56px;"><span style="color:#c80000">padding</span>:<span style="display:inline-block;width:13px"></span>.5em 1em;</div>
<svg class="a" style="left:889px;top:755px" width="5" height="7"><path d="M0 0V7L5 3.5Z" fill="#6e6e6e"/></svg>
<div class="a" style="left:1134px;top:469px;width:17px;height:297px;background:#f1f1f1"></div>
<div class="a" style="left:1136px;top:486px;width:13px;height:37px;background:#c1c1c1"></div>
<svg class="a" style="left:1139px;top:476px" width="7" height="4"><path d="M0 4L3.5 0L7 4Z" fill="#a3a3a3"/></svg>
<svg class="a" style="left:1139px;top:755px" width="7" height="4"><path d="M0 0L3.5 4L7 0Z" fill="#505050"/></svg>
<div class="a" style="left:1151px;top:469px;width:1px;height:297px;background:#cbcbcb"></div>
<div class="a" style="left:1159px;top:490px;width:183px;height:148px;background:#f9cc9d;border:1px dashed #333"></div>
<div class="a" style="left:1174px;top:511px;width:153px;height:106px;background:#fddd9b;border:1px solid #000"></div>
<div class="a" style="left:1190px;top:532px;width:121px;height:64px;background:#c3d08b;border:1px dashed #808080"></div>
<div class="a" style="left:1211px;top:553px;width:80px;height:22px;background:#8cb6c0;border:1px solid #808080"></div>
<div class="t" style="left:1171.5px;top:496.54px;font-size:10px;color:#333;">margin</div>
<div class="t" style="left:1186.5px;top:517.54px;font-size:10px;color:#333;">border</div>
<div class="t" style="left:1202px;top:539.54px;font-size:10px;color:#333;">padding</div>
<div class="t" style="left:1246px;top:496.54px;font-size:10px;color:#333;">-2</div>
<div class="t" style="left:1247.5px;top:517.54px;font-size:10px;color:#333;">–</div>
<div class="t" style="left:1248px;top:539.54px;font-size:10px;color:#333;">6</div>
<div class="t" style="left:1197.5px;top:560.54px;font-size:10px;color:#333;">12</div>
<div class="t" style="left:1294px;top:560.54px;font-size:10px;color:#333;">12</div>
<div class="t" style="left:1224.5px;top:560.54px;font-size:10px;color:#333;">34.672 × 14</div>
<div class="t" style="left:1248px;top:581.54px;font-size:10px;color:#333;">6</div>
<div class="t" style="left:1248px;top:602.54px;font-size:10px;color:#333;">2</div>
<div class="t" style="left:1247.5px;top:623.54px;font-size:10px;color:#333;">–</div>
<div class="t" style="left:1166.5px;top:560.54px;font-size:10px;color:#333;">–</div>
<div class="t" style="left:1181.5px;top:560.54px;font-size:10px;color:#333;">–</div>
<div class="t" style="left:1314.5px;top:560.54px;font-size:10px;color:#333;">–</div>
<div class="t" style="left:1330px;top:560.54px;font-size:10px;color:#333;">–</div>
<div class="a" style="left:1152px;top:659px;width:197px;height:1px;background:#cbcbcb"></div>
<div class="t" style="left:1159.5px;top:667.85px;font-size:12px;color:#757575;letter-spacing:-0.2px">Filter</div>
<div class="a" style="left:1280px;top:668px;width:11px;height:11px;border:1px solid #a2a2a2;border-radius:2px;background:linear-gradient(#f4f4f4,#e4e4e4)"></div>
<div class="t" style="left:1298.3px;top:667.85px;font-size:12px;color:#333;letter-spacing:-0.2px">Show all</div>
<div class="a" style="left:1152px;top:686px;width:197px;height:1px;background:#e0e0e0"></div>
<div class="a" style="left:1152px;top:688px;width:197px;height:33px;background:#f3f3f3"></div>
<div class="a" style="left:1152px;top:753px;width:197px;height:13px;background:#f3f3f3"></div>
<svg class="a" style="left:1158px;top:695px" width="5" height="7"><path d="M0 0V7L5 3.5Z" fill="#6e6e6e"/></svg>
<svg class="a" style="left:1158px;top:727px" width="5" height="7"><path d="M0 0V7L5 3.5Z" fill="#6e6e6e"/></svg>
<svg class="a" style="left:1158px;top:758px" width="5" height="7"><path d="M0 0V7L5 3.5Z" fill="#6e6e6e"/></svg>
<div class="m" style="left:1167.5px;top:693.56px;color:#c80000;">border-bottom-color</div>
<div class="a" style="left:1168px;top:708px;width:9px;height:9px;background:#ca2c32;border:1px solid #999"></div>
<div class="m" style="left:1180px;top:707.56px;color:#222;">rgb(202, 44, 50)</div>
<div class="m" style="left:1167.5px;top:725.56px;color:#c80000;">border-bottom-style</div>
<div class="m" style="left:1167.5px;top:739.56px;color:#222;">solid</div>
<div class="a" style="left:1152px;top:753px;width:197px;height:13px;overflow:hidden"><div class="m" style="left:15.5px;top:3.56px;color:#c80000">border-bottom-width</div></div>
<div class="a" style="left:1349px;top:469px;width:17px;height:297px;background:#f1f1f1"></div>
<div class="a" style="left:1351px;top:486px;width:13px;height:59px;background:#c1c1c1"></div>
<svg class="a" style="left:1354px;top:476px" width="7" height="4"><path d="M0 4L3.5 0L7 4Z" fill="#a3a3a3"/></svg>
<svg class="a" style="left:1354px;top:755px" width="7" height="4"><path d="M0 0L3.5 4L7 0Z" fill="#505050"/></svg>
<div class="a" style="left:0;top:766px;width:1366px;height:2px;background:#1b1b1b"></div>
<div class="a" style="left:48px;top:766px;width:344px;height:2px;background:#c4c4c4"></div>
<div class="a" style="left:736px;top:766px;width:48px;height:2px;background:#3a3a3a"></div>
</body></html>
